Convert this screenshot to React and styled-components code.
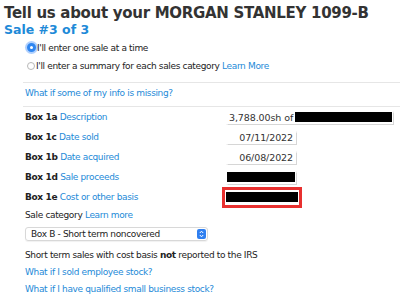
import React from "react";
import styled, { createGlobalStyle } from "styled-components";

const GlobalStyle = createGlobalStyle`
  body {
    margin: 0;
    background: #ffffff;
    font-family: "DejaVu Sans", Verdana, sans-serif;
    color: #222222;
  }
`;

const Page = styled.div`
  width: 400px;
  height: 301px;
  overflow: hidden;
  padding: 5px 0 0 4px;
  box-sizing: border-box;
`;

const Title = styled.h1`
  margin: 0;
  font-size: 15px;
  line-height: 17px;
  font-weight: bold;
  color: #333333;
  letter-spacing: -0.3px;
`;

const Subtitle = styled.h2`
  margin: 0;
  font-size: 12.5px;
  line-height: 15px;
  font-weight: bold;
  color: #1e8ad8;
`;

const Body = styled.div`
  padding-left: 21px;
  font-size: 9px;
  letter-spacing: -0.35px;
`;

const RadioGroup = styled.div`
  display: flex;
  flex-direction: column;
  gap: 7px;
  padding: 5px 0 0 2px;
`;

const RadioRow = styled.label`
  display: flex;
  align-items: center;
  height: 11px;
  color: #222222;
`;

const Radio = styled.span`
  width: ${(p) => (p.$checked ? "9px" : "8px")};
  height: ${(p) => (p.$checked ? "9px" : "8px")};
  border-radius: 50%;
  box-sizing: border-box;
  margin-right: 1px;
  flex: none;
  background: #ffffff;
  border: ${(p) => (p.$checked ? "3px solid #2f86f0" : "1px solid #b8b8b8")};
  box-shadow: ${(p) => (p.$checked ? "0 0 0 2px rgba(80, 150, 250, 0.45)" : "none")};
`;

const Link = styled.span`
  color: #1e8ad8;
`;

const Divider = styled.div`
  height: 1px;
  background: #e6e6e6;
  margin-left: -2px;
`;

const InfoLink = styled.div`
  color: #1e8ad8;
  line-height: 11px;
  padding: 5px 0 7px;
`;

const Fields = styled.div`
  display: grid;
  grid-template-columns: 201px auto;
  grid-auto-rows: 20px;
  align-items: center;
`;

const BoxLabel = styled.div`
  color: #222222;
  b {
    font-weight: bold;
  }
`;

const Input = styled.div`
  width: ${(p) => p.$width}px;
  height: 13px;
  box-sizing: border-box;
  background: #ffffff;
  box-shadow: 0 0 1px 0.5px #d6d6d6;
  font-size: 9.5px;
  letter-spacing: -0.1px;
  line-height: 13px;
  color: #333333;
  display: flex;
  align-items: center;
  justify-content: ${(p) => (p.$right ? "flex-end" : "flex-start")};
  padding: 0 3px;
  white-space: nowrap;
  overflow: hidden;
`;

const Redact = styled.span`
  display: block;
  background: #000000;
  height: 10px;
  flex: 1;
  margin: ${(p) => p.$margin || "0"};
`;

const Highlight = styled.div`
  width: 80px;
  height: 21px;
  box-sizing: border-box;
  border: 3px solid #e8302f;
  margin-left: -4px;
  padding: 2px 1px;
  display: flex;
`;

const Category = styled.div`
  padding-top: 3px;
  line-height: 11px;
`;

const Select = styled.div`
  margin-top: 6px;
  width: 183px;
  height: 14px;
  box-sizing: border-box;
  border: 1px solid #d8d8d8;
  border-radius: 3px;
  box-shadow: 0 1px 1px rgba(0, 0, 0, 0.06);
  display: flex;
  align-items: center;
  justify-content: space-between;
  padding: 0 1px 0 5px;
  font-size: 9px;
  color: #222222;
`;

const Stepper = styled.span`
  width: 9px;
  height: 10px;
  border-radius: 2px;
  background: #2f7ff0;
  display: flex;
  align-items: center;
  justify-content: center;
`;

const Note = styled.div`
  margin-top: 9px;
  line-height: 11px;
`;

const Question = styled.div`
  color: #1e8ad8;
  line-height: 11px;
  margin-top: ${(p) => p.$gap}px;
`;

const fields = [
  { box: "1a", name: "Description", input: { width: 167, text: "3,788.00sh of", redact: true } },
  { box: "1c", name: "Date sold", input: { width: 70, text: "07/11/2022", right: true } },
  { box: "1b", name: "Date acquired", input: { width: 70, text: "06/08/2022", right: true } },
  { box: "1d", name: "Sale proceeds", input: { width: 70, blackout: true } },
  { box: "1e", name: "Cost or other basis", highlight: true },
];

const renderValue = (f) => {
  if (f.highlight) {
    return (
      <Highlight>
        <Redact />
      </Highlight>
    );
  }
  const { width, text, right, redact, blackout } = f.input;
  return (
    <Input $width={width} $right={right}>
      {text}
      {redact && <Redact $margin="0 -2px 0 2px" />}
      {blackout && <Redact $margin="0 -2px" />}
    </Input>
  );
};

export default function App() {
  return (
    <Page>
      <GlobalStyle />
      <Title>Tell us about your MORGAN STANLEY 1099-B</Title>
      <Subtitle>Sale #3 of 3</Subtitle>
      <Body>
        <RadioGroup>
          <RadioRow>
            <Radio $checked />
            I'll enter one sale at a time
          </RadioRow>
          <RadioRow>
            <Radio />
            I'll enter a summary for each sales category&nbsp;<Link>Learn More</Link>
          </RadioRow>
        </RadioGroup>
        <div style={{ height: 11 }} />
        <Divider />
        <InfoLink>What if some of my info is missing?</InfoLink>
        <Divider />
        <Fields>
          {fields.map((f) => (
            <React.Fragment key={f.box}>
              <BoxLabel>
                <b>Box {f.box}</b> <Link>{f.name}</Link>
              </BoxLabel>
              {renderValue(f)}
            </React.Fragment>
          ))}
        </Fields>
        <Category>
          Sale category <Link>Learn more</Link>
        </Category>
        <Select>
          Box B - Short term noncovered
          <Stepper>
            <svg width="5" height="8" viewBox="0 0 5 8">
              <path d="M0.8 3 L2.5 1.2 L4.2 3 M0.8 5 L2.5 6.8 L4.2 5" fill="none" stroke="#fff" strokeWidth="1" />
            </svg>
          </Stepper>
        </Select>
        <Note>
          Short term sales with cost basis <b>not</b> reported to the IRS
        </Note>
        <Question $gap={6}>What if I sold employee stock?</Question>
        <Question $gap={6}>What if I have qualified small business stock?</Question>
      </Body>
    </Page>
  );
}
